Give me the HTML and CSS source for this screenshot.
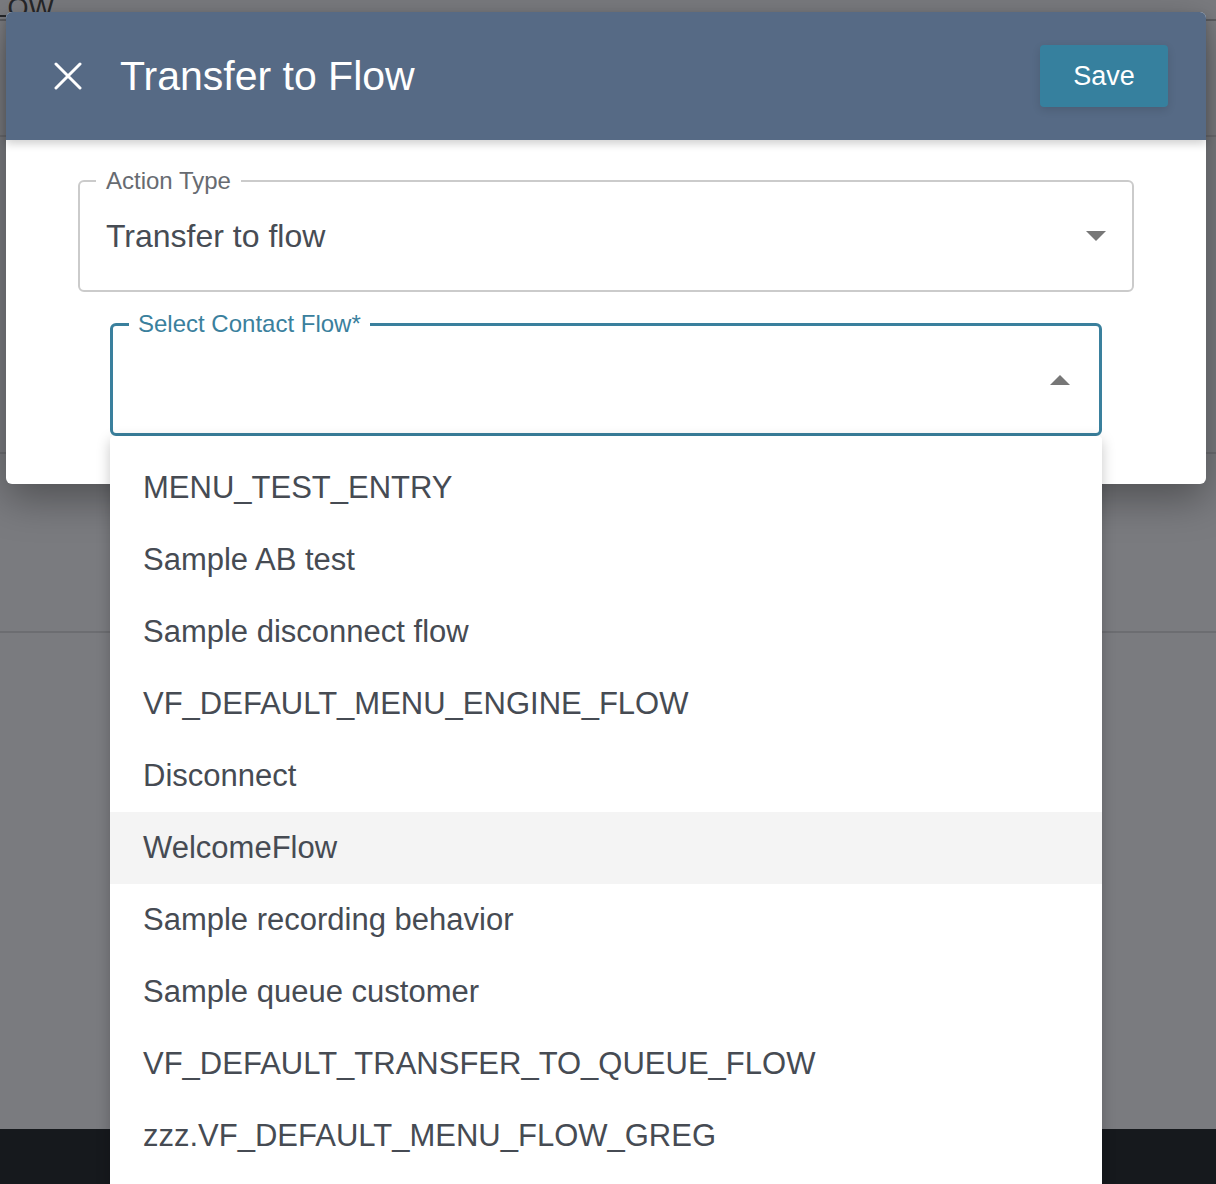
FILE: index.html
```html
<!DOCTYPE html>
<html lang="en">
<head>
  <meta charset="UTF-8" />
  <meta name="viewport" content="width=device-width, initial-scale=1.0" />
  <title>Transfer to Flow</title>
  <link rel="stylesheet" href="styles.css">
</head>
<body>

  <!-- page under the dialog, dimmed -->
  <div class="page">
    <div class="page-head"><span class="page-title">FLOW</span></div>
    <div class="page-row row-a"></div>
    <div class="page-row row-b"></div>
    <div class="page-row row-c"></div>
    <div class="page-fill"></div>
    <div class="page-footer"></div>
  </div>

  <div class="modal">
    <div class="modal-header">
      <button class="close-btn" aria-label="Close">
        <svg width="28" height="28" viewBox="0 0 28 28">
          <path d="M2 2 L26 26 M26 2 L2 26" stroke="#fff" stroke-width="3" stroke-linecap="round" fill="none" />
        </svg>
      </button>
      <h2 class="modal-title">Transfer to Flow</h2>
      <button class="save-btn">Save</button>
    </div>

    <div class="modal-body">
      <div class="field">
        <label class="field-label">Action Type</label>
        <span class="field-value">Transfer to flow</span>
        <span class="caret caret-down"></span>
      </div>

      <div class="field field-focused">
        <label class="field-label">Select Contact Flow*</label>
        <span class="field-value"></span>
        <span class="caret caret-up"></span>

        <ul class="menu" id="flow-menu"></ul>
      </div>
    </div>
  </div>

  <script>
    const flows = [
      "MENU_TEST_ENTRY",
      "Sample AB test",
      "Sample disconnect flow",
      "VF_DEFAULT_MENU_ENGINE_FLOW",
      "Disconnect",
      "WelcomeFlow",
      "Sample recording behavior",
      "Sample queue customer",
      "VF_DEFAULT_TRANSFER_TO_QUEUE_FLOW",
      "zzz.VF_DEFAULT_MENU_FLOW_GREG"
    ];

    const menu = document.getElementById("flow-menu");
    flows.forEach((name) => {
      const li = document.createElement("li");
      li.className = "menu-item";
      if (name === "WelcomeFlow") li.classList.add("hover");
      li.textContent = name;
      menu.appendChild(li);
    });
  </script>
</body>
</html>
```

FILE: styles.css
```css
body {
  margin: 0;
  height: 1184px;
  overflow: hidden;
  position: relative;
  font-family: "Liberation Sans", Arial, sans-serif;
  background: #7a7b7f;
}

/* dimmed page */
.page {
  display: flex;
  flex-direction: column;
  height: 1184px;
}

.page-head {
  height: 19px;
  border-bottom: 2px solid #5c5d61;
  overflow: hidden;
}

.page-title {
  display: block;
  margin: -5px 0 0 -24px;
  font-size: 27px;
  line-height: 27px;
  color: #26272a;
}

.page-row {
  border-bottom: 2px solid #6c6d71;
}

.row-a { height: 114px; }
.row-b { height: 315px; }
.row-c { height: 177px; }

.page-fill {
  flex: 1;
}

.page-footer {
  height: 55px;
  background: #16191d;
}

/* dialog */
.modal {
  position: absolute;
  top: 12px;
  left: 6px;
  width: 1200px;
  height: 472px;
  background: #fff;
  border-radius: 6px;
  box-shadow: 0 14px 40px rgba(0, 0, 0, 0.35);
}

.modal-header {
  height: 128px;
  display: flex;
  align-items: center;
  padding: 0 38px 0 48px;
  background: #566a85;
  border-radius: 6px 6px 0 0;
  box-shadow: 0 4px 8px rgba(0, 0, 0, 0.18);
  position: relative;
}

.close-btn {
  background: none;
  border: none;
  padding: 0;
  width: 28px;
  height: 28px;
  cursor: pointer;
  display: flex;
}

.modal-title {
  margin: 0 0 0 38px;
  flex: 1;
  font-size: 41px;
  font-weight: normal;
  color: #fff;
}

.save-btn {
  width: 128px;
  height: 62px;
  border: none;
  border-radius: 4px;
  background: #36809e;
  color: #fff;
  font-family: inherit;
  font-size: 27px;
  cursor: pointer;
  box-shadow: 0 3px 8px rgba(0, 0, 0, 0.12);
}

.modal-body {
  padding: 40px 72px;
  display: flex;
  flex-direction: column;
  gap: 31px;
}

.field {
  position: relative;
  height: 112px;
  box-sizing: border-box;
  border: 2px solid #cbcbcb;
  border-radius: 6px;
  display: flex;
  align-items: center;
  padding: 0 26px;
}

.field-label {
  position: absolute;
  top: -15px;
  left: 16px;
  padding: 0 10px;
  background: #fff;
  font-size: 24px;
  line-height: 27px;
  color: #676b71;
}

.field-value {
  flex: 1;
  font-size: 32px;
  color: #474c54;
}

.caret {
  width: 0;
  height: 0;
  border-left: 10px solid transparent;
  border-right: 10px solid transparent;
}

.caret-down {
  border-top: 10px solid #777;
}

.caret-up {
  border-bottom: 10px solid #777;
}

.field-focused {
  margin: 0 32px;
  height: 113px;
  border: 3px solid #3a809d;
  padding: 0 29px 0 26px;
}

.field-focused .field-label {
  top: -16px;
  left: 16px;
  padding: 0 9px;
  color: #3a809d;
}

/* options list */
.menu {
  position: absolute;
  top: calc(100% + 3px);
  left: -3px;
  right: -3px;
  margin: 0;
  padding: 16px 0;
  list-style: none;
  background: #fff;
  border-radius: 4px;
  box-shadow: 0 4px 14px rgba(0, 0, 0, 0.22);
  z-index: 2;
}

.menu-item {
  height: 72px;
  display: flex;
  align-items: center;
  padding-left: 33px;
  font-size: 31px;
  color: #464b53;
  cursor: pointer;
}

.menu-item.hover {
  background: #f4f4f4;
}
```
